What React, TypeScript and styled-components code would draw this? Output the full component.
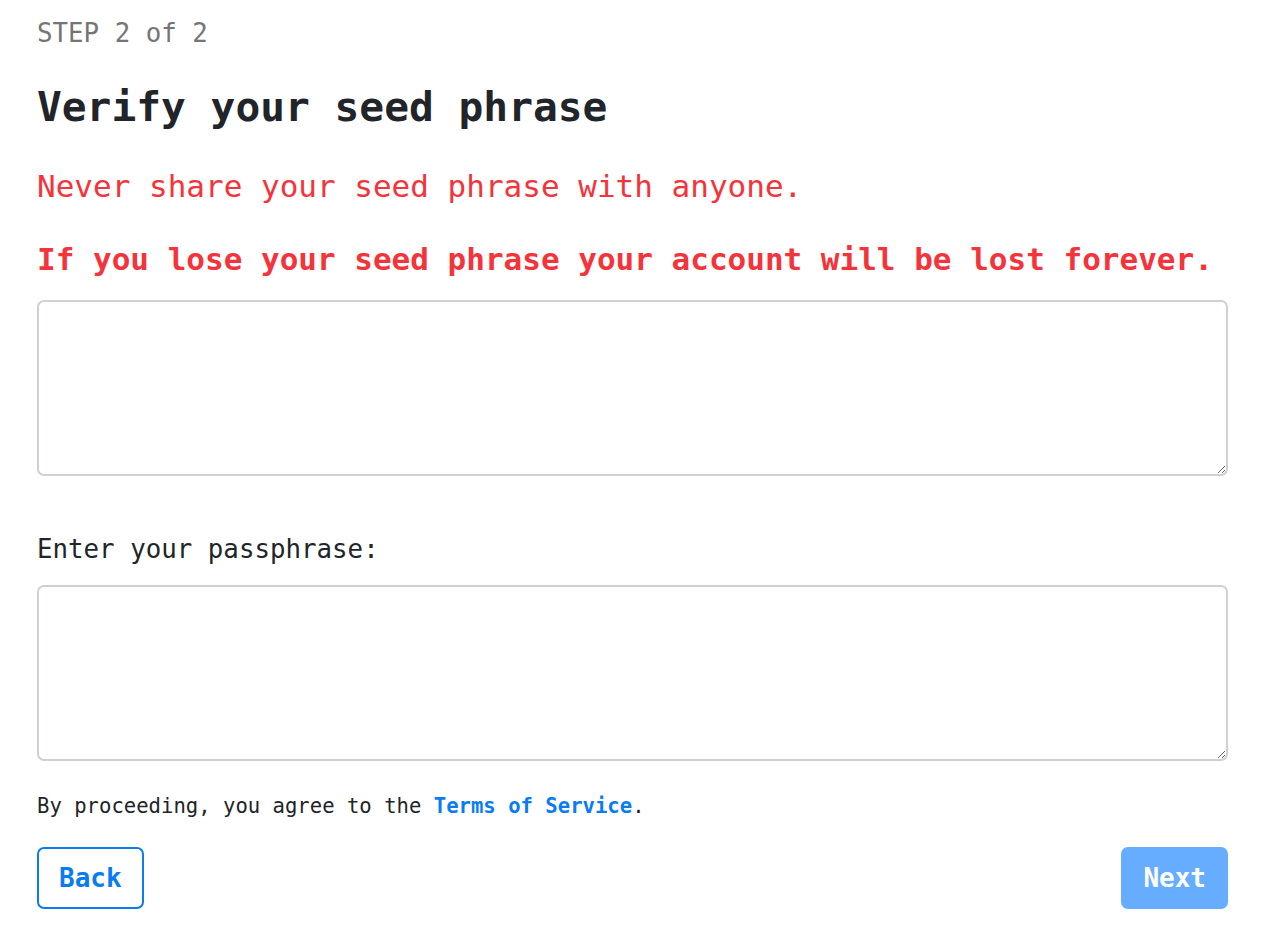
import React from "react";
import styled, { createGlobalStyle } from "styled-components";

const GlobalStyle = createGlobalStyle`
  body {
    margin: 0;
    background: #ffffff;
    font-family: "DejaVu Sans Mono", "Liberation Mono", monospace;
  }
`;

const Page = styled.main`
  padding: 18px 52px 32px 37px;
  display: flex;
  flex-direction: column;
`;

const Step = styled.div`
  font-size: 25.8px;
  line-height: 31px;
  color: #757575;
`;

const Title = styled.h1`
  margin: 33px 0 0;
  font-size: 41.2px;
  line-height: 50px;
  font-weight: 700;
  color: #212529;
`;

const Warning = styled.p<{ $bold?: boolean; $gap: number }>`
  margin: ${({ $gap }) => $gap}px 0 0;
  font-size: 31px;
  line-height: 37px;
  color: #f5333b;
  font-weight: ${({ $bold }) => ($bold ? 700 : 400)};
`;

const Field = styled.textarea<{ $gap: number }>`
  display: block;
  box-sizing: border-box;
  margin-top: ${({ $gap }) => $gap}px;
  width: 100%;
  height: 176px;
  border: 2px solid #cdd1d6;
  border-radius: 7px;
  padding: 10px 14px;
  font-family: inherit;
  font-size: 20px;
  outline: none;
`;

const Label = styled.label`
  margin-top: 58px;
  font-size: 25.8px;
  line-height: 31px;
  color: #212529;
`;

const Terms = styled.p`
  margin: 33px 0 0;
  font-size: 20.6px;
  line-height: 25px;
  color: #212529;
`;

const TermsLink = styled.a`
  color: #0a7cf2;
  font-weight: 700;
  text-decoration: none;
`;

const Actions = styled.div`
  margin-top: 28px;
  display: flex;
  justify-content: space-between;
`;

const Button = styled.button<{ $primary?: boolean }>`
  box-sizing: border-box;
  height: 62px;
  padding: 0 20px;
  border-radius: 7px;
  font-family: inherit;
  font-size: 26px;
  font-weight: 700;
  cursor: pointer;
  border: 2px solid ${({ $primary }) => ($primary ? "#66adff" : "#0a7cf2")};
  background: ${({ $primary }) => ($primary ? "#66adff" : "#ffffff")};
  color: ${({ $primary }) => ($primary ? "#ffffff" : "#0a7cf2")};
`;

export default function App() {
  return (
    <>
      <GlobalStyle />
      <Page>
        <Step>STEP 2 of 2</Step>
        <Title>Verify your seed phrase</Title>
        <Warning $gap={36}>Never share your seed phrase with anyone.</Warning>
        <Warning $gap={36} $bold>
          If you lose your seed phrase your account will be lost forever.
        </Warning>
        <Field $gap={22} />
        <Label>Enter your passphrase:</Label>
        <Field $gap={20} />
        <Terms>
          By proceeding, you agree to the <TermsLink href="#">Terms of Service</TermsLink>.
        </Terms>
        <Actions>
          <Button>Back</Button>
          <Button $primary>Next</Button>
        </Actions>
      </Page>
    </>
  );
}
